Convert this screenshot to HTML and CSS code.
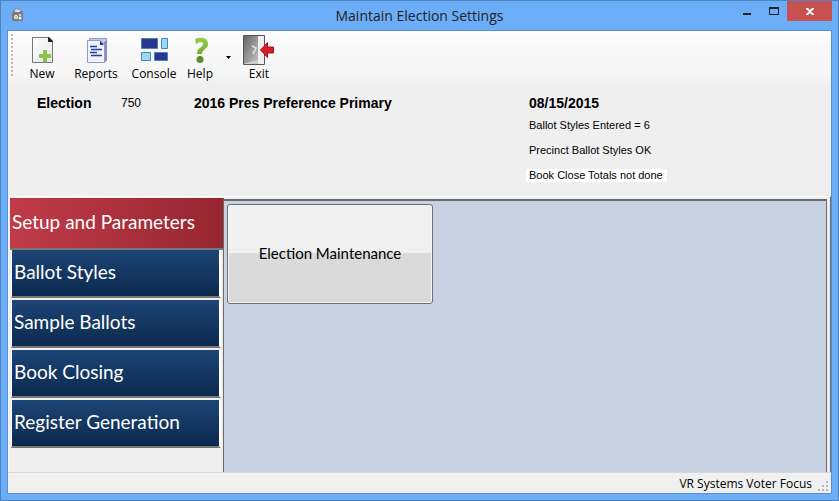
FILE: index.html
```html
<!DOCTYPE html>
<html lang="en">
  <head>
    <meta charset="utf-8" />
    <title>Maintain Election Settings</title>
    <link rel="stylesheet" href="styles.css">
  </head>
  <body>
    <div class="window">
      <header class="titlebar">
        <svg class="app-icon" width="12" height="14" viewBox="0 0 12 14">
          <path d="M3 1h5v5H3z" fill="#e6e6e6" stroke="#888" stroke-width="1" />
          <path d="M0 5l2-2h8l1 2v8H0z" fill="#7c7c80" />
          <path d="M3 2h5v2H3z" fill="#ddd" />
          <circle cx="4" cy="9" r="2" fill="#fff" />
          <circle cx="8" cy="7" r="1" fill="#eee" />
          <circle cx="8" cy="10" r="1.500" fill="#fff" />
          <circle cx="4" cy="9" r="1" fill="#aaa" />
        </svg>
        <h1 class="title">Maintain Election Settings</h1>
        <div class="controls">
          <button class="control minimize" aria-label="Minimize">
            <svg width="8" height="2"><path d="M0 0h8v2H0z" fill="#222" /></svg>
          </button>
          <button class="control maximize" aria-label="Maximize">
            <svg width="10" height="8"><path d="M0 0h10v8H0zM1 2v5h8V2z" fill="#222" fill-rule="evenodd" /></svg>
          </button>
          <button class="control close" aria-label="Close">
            <svg width="8" height="7" viewBox="0 0 8 7"><path d="M0 0h2l2 2 2-2h2v1L5 3.500l3 2.500v1H6L4 5 2 7H0V6l3-2.500L0 1z" fill="#fff" /></svg>
          </button>
        </div>
      </header>

      <main class="client">
        <nav class="toolbar" aria-label="Toolbar">
          <span class="grip"></span>
          <button class="tool tool-new">
            <svg width="32" height="32" viewBox="0 0 32 32">
              <defs>
                <linearGradient id="paper" x1="0" y1="0" x2="1" y2="1">
                  <stop offset="0" stop-color="#fff" />
                  <stop offset="1" stop-color="#e4e4e4" />
                </linearGradient>
              </defs>
              <path d="M6.500 3.500H22l4.500 4.500v20.500h-20z" fill="url(#paper)" stroke="#777" />
              <path d="M22 3h1l4 4v1h-5z" fill="#222" />
              <path d="M17.500 16.500h3v4h4v3h-4v4h-3v-4h-4v-3h4z" fill="#8cc540" stroke="#6cab2b" stroke-width=".6" />
            </svg>
            <span>New</span>
          </button>
          <button class="tool tool-reports">
            <svg width="32" height="32" viewBox="0 0 32 32">
              <path d="M9.500 4.500h17v22l-2 1h-15z" fill="#c3c9e8" stroke="#9299c6" />
              <path d="M24 8l3-2v20l-3 3z" fill="#8790c0" />
              <path d="M7.500 6.500H20l4.500 4v18h-17z" fill="#f0f2fc" stroke="#9299c6" />
              <path d="M20 7l4 4h-4z" fill="#25317a" />
              <path d="M10 12.500h7M11 15.500h11M10 18.500h7M11 21.500h11" stroke="#253b98" stroke-width="1.500" />
            </svg>
            <span>Reports</span>
          </button>
          <button class="tool tool-console">
            <svg width="32" height="32" viewBox="0 0 32 32">
              <g stroke="#4e83b8">
                <path d="M3.500 4.500h16v10h-16zM16.500 18.500h13v8h-13z" fill="#26378e" />
                <path d="M23.500 4.500h6v10h-6zM3.500 18.500h9v8h-9z" fill="#98daf3" />
              </g>
            </svg>
            <span>Console</span>
          </button>
          <button class="tool tool-help">
            <svg width="32" height="32" viewBox="0 0 32 32">
              <defs>
                <linearGradient id="green" x1="0" y1="0" x2="0" y2="1">
                  <stop offset="0" stop-color="#95ce45" />
                  <stop offset="1" stop-color="#6fae2f" />
                </linearGradient>
              </defs>
              <path d="M11 5c5-2 13-2 13 5 0 5-6 5-6 10h-5c0-7 6-6 6-10 0-3-4-2-7 0z" fill="url(#green)" />
              <circle cx="16" cy="25.500" r="3.500" fill="#588f2b" />
            </svg>
            <span>Help</span>
          </button>
          <button class="drop" aria-label="Help options">
            <svg width="5" height="3"><path d="M0 0h5L2.500 3z" fill="#000" /></svg>
          </button>
          <button class="tool tool-exit">
            <svg width="32" height="32" viewBox="0 0 32 32">
              <defs>
                <linearGradient id="door" x1="0" y1="0" x2="1" y2="1">
                  <stop offset="0" stop-color="#666" />
                  <stop offset="1" stop-color="#c4c4c4" />
                </linearGradient>
              </defs>
              <path d="M.5 1.500h21v29H.5z" fill="#efefef" stroke="#555" />
              <path d="M1 2h14v24L1 30z" fill="url(#door)" />
              <path d="M1 30l14-4v4z" fill="#ccc" />
              <path d="M9 12l4 2-3 6" fill="none" stroke="#e5e5e5" stroke-width="1.500" />
              <path d="M17.500 16l7-7.500v4.500h6v6h-6v4.500z" fill="#d91c28" stroke="#9a1820" />
            </svg>
            <span>Exit</span>
          </button>
        </nav>

        <section class="summary">
          <strong>Election</strong>
          <span class="number">750</span>
          <strong>2016 Pres Preference Primary</strong>
          <div class="status">
            <strong>08/15/2015</strong>
            <p>Ballot Styles Entered = 6</p>
            <p>Precinct Ballot Styles OK</p>
            <p class="pending">Book Close Totals not done</p>
          </div>
        </section>

        <div class="workspace">
          <nav class="sidebar" aria-label="Sections">
            <button class="tab active">Setup and Parameters</button>
            <button class="tab">Ballot Styles</button>
            <button class="tab">Sample Ballots</button>
            <button class="tab">Book Closing</button>
            <button class="tab">Register Generation</button>
          </nav>
          <section class="panel">
            <button class="action">Election Maintenance</button>
          </section>
        </div>

        <footer class="statusbar">
          <span>VR Systems Voter Focus</span>
          <svg width="10" height="10" viewBox="0 0 10 10">
            <path d="M8 0h2v2H8zM4 4h2v2H4zM8 4h2v2H8zM0 8h2v2H0zM4 8h2v2H4zM8 8h2v2H8z" fill="#b5b5b5" />
          </svg>
        </footer>
      </main>
    </div>
  </body>
</html>
```

FILE: styles.css
```css
* {
  box-sizing: border-box;
}
body {
  margin: 0;
  color: #000;
  font-family: "Open Sans", "Noto Sans", sans-serif;
  font-size: 12px;
}
button {
  margin: 0;
  padding: 0;
  border: 0;
  background: none;
  color: inherit;
  font: inherit;
}
svg {
  display: block;
}
.window {
  display: flex;
  flex-direction: column;
  min-height: 100vh;
  padding: 0 6px 6px;
  border: 1px solid #4f82bb;
  background: #6badf6;
}

/* title bar */
.titlebar {
  display: grid;
  grid-template-columns: 1fr auto 1fr;
  height: 29px;
}
.app-icon {
  margin: 7px 0 0 5px;
}
.title {
  margin: 0;
  color: #222;
  font-size: 14px;
  font-weight: normal;
  line-height: 29px;
}
.controls {
  display: flex;
  justify-content: flex-end;
  height: 20px;
}
.control {
  display: flex;
  align-items: center;
  justify-content: center;
  width: 27px;
}
.minimize {
  padding-top: 6px;
}
.close {
  width: 45px;
  background: #c75050;
}

/* client area */
.client {
  display: flex;
  flex: 1;
  flex-direction: column;
  border: 1px solid #5790d0;
  background: #efefef;
}
.toolbar {
  display: flex;
  height: 53px;
  padding: 3px 3px 0;
  background: linear-gradient(#fefefe, #f8f8f8 30%, #f6f6f6 85%, #efefef);
}
.grip {
  width: 2px;
  height: 44px;
  margin-right: 13px;
  background: repeating-linear-gradient(#bbb 0 2px, transparent 2px 4px);
}
.tool {
  display: flex;
  flex-direction: column;
  align-items: center;
  line-height: 16px;
}
.tool-new {
  width: 32px;
}
.tool-reports {
  width: 76px;
}
.tool-console {
  width: 40px;
}
.tool-help {
  width: 52px;
}
.tool-exit {
  width: 32px;
  margin-left: 12px;
}
.drop {
  padding-bottom: 4px;
}

/* election summary */
.summary {
  display: grid;
  grid-template-columns: 84px 73px 335px 1fr;
  align-items: start;
  height: 112px;
  padding: 11px 0 0 29px;
  font-family: "Liberation Sans", Arial, sans-serif;
  line-height: 17px;
}
.summary strong {
  font-size: 14px;
}
.status p {
  width: fit-content;
  margin: 0 0 12px -3px;
  padding: 0 4px 0 3px;
  font-size: 11px;
  line-height: 13px;
}
.status strong {
  display: block;
  margin-bottom: 7px;
}
.status .pending {
  background: #fff;
}

/* section tabs and panel */
.workspace {
  display: flex;
  flex: 1;
  padding-right: 2px;
  border-top: 1px solid #fff;
  border-right: 1px solid #6a6a6a;
}
.sidebar {
  display: flex;
  flex-direction: column;
  align-items: flex-start;
  width: 215px;
  padding: 1px 0 0 2px;
  border-left: 1px solid #f8f8f8;
  font-family: Lato, sans-serif;
  font-size: 19px;
}
.tab {
  width: 210px;
  height: 48px;
  margin: 0 0 2px;
  padding: 0 0 2px 2px;
  border: solid #777;
  border-width: 0 2px 2px 1px;
  border-right-color: #fff;
  border-left-color: #fff;
  background: linear-gradient(#1d4576, #0b294e) padding-box;
  color: #fff;
  line-height: 44px;
  text-align: left;
}
.tab.active {
  width: 214px;
  height: 52px;
  margin: 0 0 0 -1px;
  border-right: 0;
  border-left: 0;
  background: linear-gradient(90deg, #c13b49, #962630);
  line-height: 48px;
}
.panel {
  flex: 1;
  margin: 2px 1px 0 0;
  padding: 3px;
  border: solid #6a6a6a;
  border-width: 2px 1px 0;
  background: #c9d2e3;
}
.action {
  width: 206px;
  height: 100px;
  padding-bottom: 2px;
  border: 1px solid #707070;
  border-radius: 3px;
  background: linear-gradient(#f0f0f0 0 49%, #dadada 49%);
  box-shadow: inset 0 0 0 1px #f5f5f5;
  font-family: Lato, sans-serif;
  font-size: 15px;
}
.statusbar {
  display: flex;
  justify-content: flex-end;
  gap: 6px;
  height: 21px;
  padding-right: 3px;
  border-top: 1px solid #d7d7d7;
  background: #f0f0f0;
  line-height: 21px;
}
.statusbar svg {
  margin-top: 8px;
}
```
